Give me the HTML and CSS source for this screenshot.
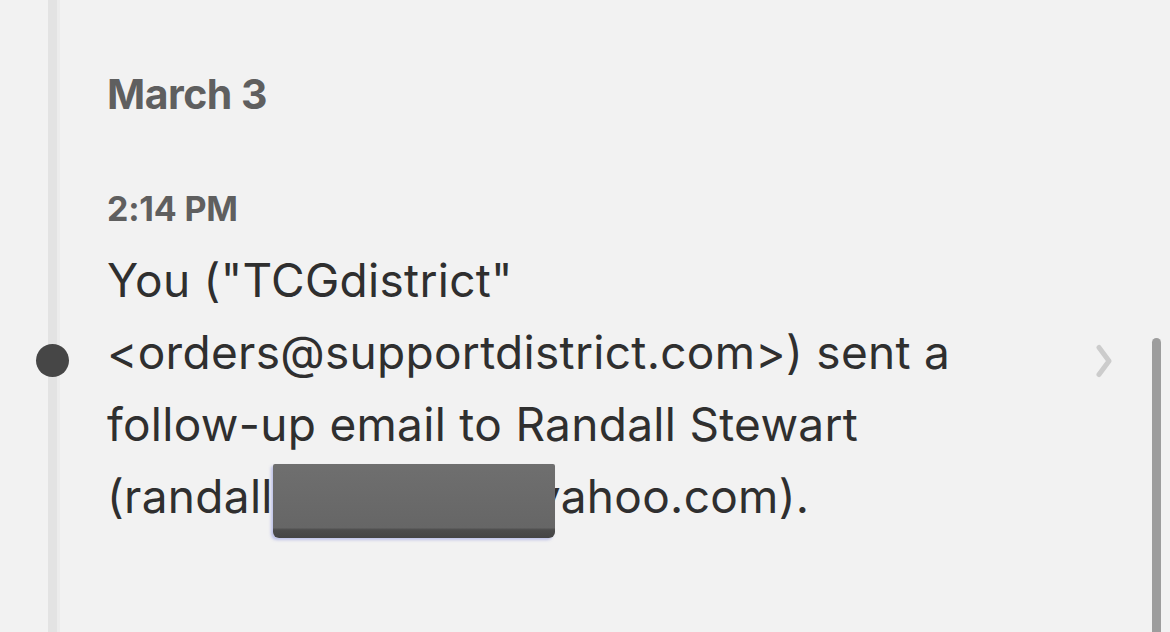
FILE: index.html
```html
<!DOCTYPE html>
<html lang="en">
<head>
  <meta charset="UTF-8">
  <title>Activity - March 3</title>
  <link rel="stylesheet" href="styles.css">
</head>
<body>
<main class="feed">
  <h2 class="day">March 3</h2>

  <div class="entry">
    <div class="rail"><span class="dot"></span></div>
    <div class="body">
      <div class="time">2:14 PM</div>
      <p class="text">You ("TCGdistrict" &lt;orders@supportdistrict.com&gt;) sent a follow-up email to Randall Stewart <span class="nowrap">(randall<span class="redact"></span>yahoo.com).</span></p>
    </div>
    <div class="more">
      <svg width="16" height="34" viewBox="0 0 16 34"><path d="M3 3.5 L13 17 L3 30.5" fill="none" stroke="#cccccc" stroke-width="5" stroke-linecap="round" stroke-linejoin="round"/></svg>
    </div>
  </div>

  <div class="scrollbar"></div>
</main>
</body>
</html>
```

FILE: styles.css
```css
body { margin: 0; background: #f2f2f2; font-family: Inter, "Noto Sans", sans-serif; overflow: hidden; }
.feed { position: relative; height: 632px; padding-top: 70px; box-sizing: border-box; }
.feed::before { content: ""; position: absolute; left: 48px; top: 0; bottom: 0; width: 9px; background: #e3e3e3; box-shadow: 3px 0 0 #ececec; }
.day { margin: 0 0 70px 107px; font-size: 41px; line-height: 1.2; font-weight: 700; color: #5f5f5f; letter-spacing: -0.5px; }
.entry { display: grid; grid-template-columns: 107px 973px 1fr; align-items: center; }
.rail { position: relative; }
.dot { display: block; width: 33px; height: 33px; margin-left: 36px; margin-top: -6px; border-radius: 50%; background: #464646; }
.time { font-size: 34px; line-height: 1.2; font-weight: 700; color: #5f5f5f; letter-spacing: -0.2px; margin-bottom: 14px; }
.text { margin: 0; font-size: 46px; line-height: 72px; color: #2f2f2f; letter-spacing: 0.3px; }
.nowrap { white-space: nowrap; }
.redact { display: inline-block; position: relative; width: 282px; height: 74px; vertical-align: -25px; margin-right: -20px; border-radius: 2px 2px 6px 6px; background: linear-gradient(to bottom, #6f6f6f 0, #666 86%, #4c4c4c 89%, #444 100%); box-shadow: -2px 2px 3px rgba(90, 100, 210, 0.35); }
.more { padding-left: 16px; margin-top: -6px; }
.more svg { display: block; }
.scrollbar { position: absolute; right: 9px; top: 338px; bottom: -10px; width: 9px; border-radius: 5px; background: #9d9d9d; }
```
